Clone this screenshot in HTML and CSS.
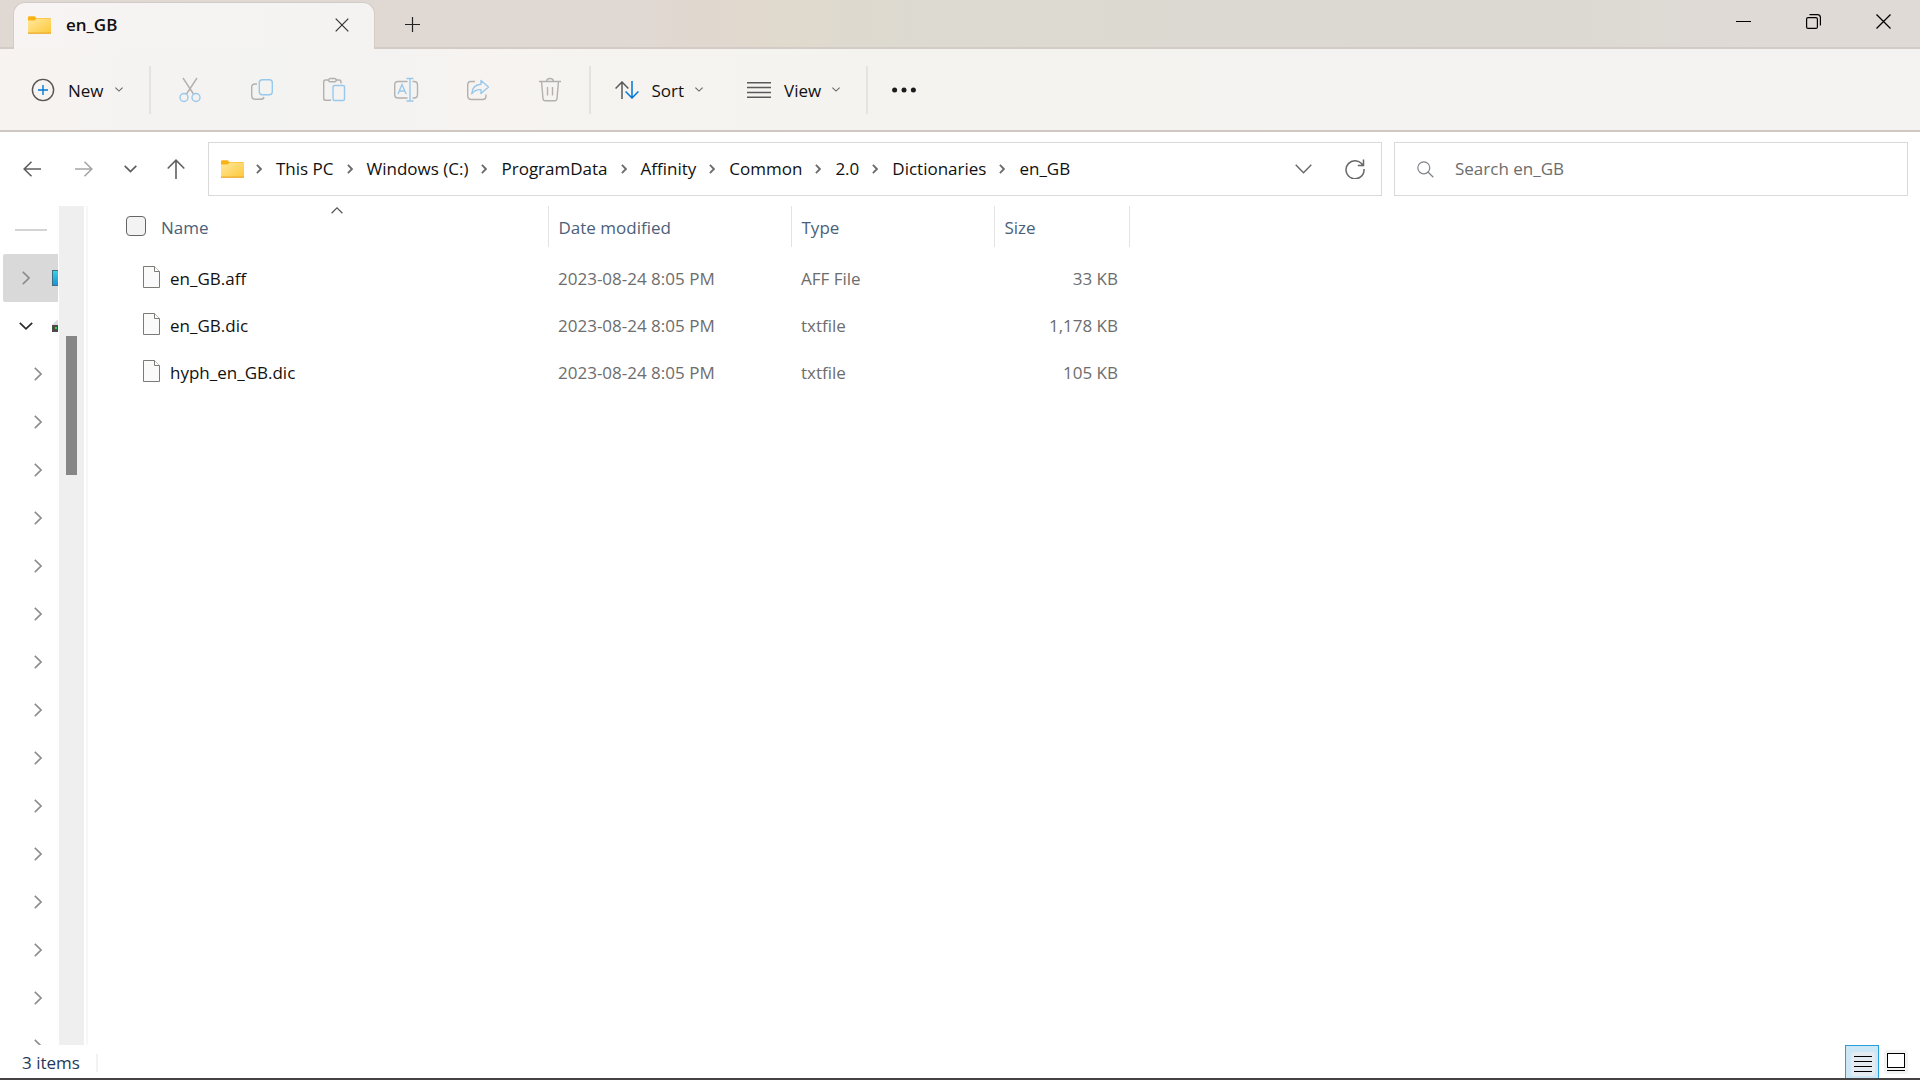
FILE: index.html
```html
<!DOCTYPE html>
<html lang="en">
<head>
<meta charset="utf-8">
<title>en_GB</title>
<link rel="stylesheet" href="styles.css">
</head>
<body>
<svg class="sprite" width="0" height="0" aria-hidden="true">
  <defs>
    <linearGradient id="folder-fill" x1="0" y1="0" x2="1" y2="1">
      <stop offset="0" stop-color="#ffe8a0"/><stop offset="1" stop-color="#fdc93a"/>
    </linearGradient>
    <linearGradient id="screen-fill" x1="0" y1="0" x2="0" y2="1">
      <stop offset="0" stop-color="#34d3e6"/><stop offset="1" stop-color="#1a93d2"/>
    </linearGradient>
    <symbol id="folder" viewBox="0 0 23 18">
      <path d="M0 1.5Q0 .2 1.3 .2H6.6L8.4 2H22.5V6H0Z" fill="#f9b316"/>
      <path d="M0 4.4H6.6L8.6 2.6H23V17H0Z" fill="url(#folder-fill)"/>
      <path d="M0 17.2H23" stroke="#eaa61f" stroke-width="1.2"/>
    </symbol>
    <symbol id="small-down" viewBox="0 0 8 5"><path d="M.4 .6L4 4.1L7.6 .6" fill="none" stroke="#666" stroke-width="1.1"/></symbol>
    <symbol id="crumb" viewBox="0 0 6 10"><path d="M.9 .9L4.9 5L.9 9.100" fill="none" stroke="#6b6b6b" stroke-width="1.8"/></symbol>
    <symbol id="tree-right" viewBox="0 0 8 14"><path d="M.8 .9L7 7L.8 13.100" fill="none" stroke="#8c8c8c" stroke-width="1.6"/></symbol>
    <symbol id="file" viewBox="0 0 17 22">
      <path d="M.5 .5H11.500L16.500 5.500V21.500H.5Z" fill="#fafafa" stroke="#7a7a76"/>
      <path d="M11.500 .5V5.500H16.500" fill="#fff" stroke="#7a7a76"/>
    </symbol>
  </defs>
</svg>

<header class="titlebar">
  <div class="tab">
    <svg class="folder"><use href="#folder"/></svg>
    <span class="tab-title">en_GB</span>
    <button class="tab-close" aria-label="Close tab"><svg width="14" height="14" viewBox="0 0 14 14"><path d="M.7 .7L13.300 13.300M13.300 .7L.7 13.300" fill="none" stroke="#333" stroke-width="1.200"/></svg></button>
  </div>
  <button class="new-tab" aria-label="New tab"><svg width="15" height="15" viewBox="0 0 15 15"><path d="M7.500 0V15M0 7.500H15" stroke="#222" stroke-width="1.200"/></svg></button>
  <div class="window-buttons">
    <button aria-label="Minimize"><svg width="15" height="15" viewBox="0 0 15 15"><path d="M0 7.500H15" stroke="#000"/></svg></button>
    <button aria-label="Restore"><svg width="15" height="15" viewBox="0 0 15 15" fill="none" stroke="#000" stroke-width="1.200"><rect x=".6" y="3.600" width="10.800" height="10.800" rx="1.500"/><path d="M3.500 .6H11.500Q14.400 .6 14.400 3.500V11.500"/></svg></button>
    <button aria-label="Close"><svg width="15" height="15" viewBox="0 0 15 15"><path d="M.5 .5L14.500 14.500M14.500 .5L.5 14.500" stroke="#000" stroke-width="1.300"/></svg></button>
  </div>
</header>

<div class="toolbar" role="toolbar" aria-label="Commands">
  <button class="command command-new">
    <svg width="24" height="24" viewBox="0 0 24 24" fill="none"><circle cx="12" cy="12" r="10.600" stroke="#555" stroke-width="1.400"/><path d="M12 7V17M7 12H17" stroke="#0078d4" stroke-width="1.400"/></svg>
    <span>New</span><svg class="small-down"><use href="#small-down"/></svg>
  </button>
  <span class="divider"></span>
  <button class="tool" aria-label="Cut" disabled><svg width="24" height="26" viewBox="0 0 24 26" fill="none" stroke-width="1.400"><path d="M5 1L15.500 17M19 1L8.500 17" stroke="#b3b1b0"/><circle cx="6" cy="20.500" r="4" stroke="#98c8ec"/><circle cx="18" cy="20.500" r="4" stroke="#98c8ec"/></svg></button>
  <button class="tool" aria-label="Copy" disabled><svg width="24" height="26" viewBox="0 0 24 26" fill="none" stroke-width="1.400"><path d="M7 7H5Q1.700 7 1.700 10.300V18.500Q1.700 22.300 5.500 22.300H10.500Q13.500 22.300 14 20" stroke="#b3b1b0"/><rect x="9.300" y="2.700" width="13" height="15" rx="3" stroke="#98c8ec"/></svg></button>
  <button class="tool" aria-label="Paste" disabled><svg width="24" height="26" viewBox="0 0 24 26" fill="none" stroke-width="1.400"><path d="M6.500 3H3.500Q1.700 3 1.700 4.800V21.500Q1.700 23.300 3.500 23.300H9M14 3H17Q19 3 19 5V6.500" stroke="#b3b1b0"/><rect x="6.700" y="1.500" width="7.500" height="3.200" rx="1.500" stroke="#b3b1b0"/><rect x="11" y="8.500" width="11.500" height="15" rx="1.500" stroke="#98c8ec"/></svg></button>
  <button class="tool" aria-label="Rename" disabled><svg width="26" height="26" viewBox="0 0 26 26" fill="none" stroke-width="1.400"><path d="M14.500 4.500H5Q1.700 4.500 1.700 8V17.500Q1.700 21 5 21H14.500M19.500 4.500H21Q24.500 4.500 24.500 8V17.500Q24.500 21 21 21H19.500" stroke="#b3b1b0"/><path d="M5 17L9 7.500L13.200 17M6.500 14H11.800M17 1.500V24M13.500 1.500H20.500M13.500 24H20.500" stroke="#98c8ec"/></svg></button>
  <button class="tool" aria-label="Share" disabled><svg width="24" height="26" viewBox="0 0 24 26" fill="none" stroke-width="1.400" stroke-linejoin="round"><path d="M9 4.500H5Q1.700 4.500 1.700 8V18.500Q1.700 22.500 5.500 22.500H16.500Q20 22.500 20 19V17.500" stroke="#b3b1b0"/><path d="M15 3.500L22.500 10L15 16.500V12.700Q9.500 12.300 5.700 16.800Q6.500 7.500 15 7.200Z" stroke="#98c8ec"/></svg></button>
  <button class="tool" aria-label="Delete" disabled><svg width="24" height="26" viewBox="0 0 24 26" fill="none" stroke="#b3b1b0" stroke-width="1.400"><path d="M1 4.500H23M8.500 4.500Q8.700 1.500 12 1.500Q15.300 1.500 15.500 4.500M3.500 4.500L5 21.500Q5.200 23.800 7.200 23.800H16.800Q18.800 23.800 19 21.500L20.500 4.500M9.500 10V18.500M14.500 10V18.500"/></svg></button>
  <span class="divider"></span>
  <button class="command command-sort">
    <svg width="24" height="18" viewBox="0 0 24 18" fill="none" stroke-width="1.500"><path d="M7 18V1M.6 7.500L7 1L13.400 7.500" stroke="#5a5a5a"/><path d="M17 0V17M10.600 10.500L17 17L23.400 10.500" stroke="#0078d4"/></svg>
    <span>Sort</span><svg class="small-down"><use href="#small-down"/></svg>
  </button>
  <button class="command command-view">
    <svg width="24" height="16" viewBox="0 0 24 16"><path d="M0 .8H24M0 5.600H24M0 10.400H24M0 15.200H24" stroke="#5a5a5a" stroke-width="1.500"/></svg>
    <span>View</span><svg class="small-down"><use href="#small-down"/></svg>
  </button>
  <span class="divider"></span>
  <button class="more" aria-label="See more"><svg width="24" height="6" viewBox="0 0 24 6" fill="#1b1b1b"><circle cx="2.600" cy="3" r="2.500"/><circle cx="12" cy="3" r="2.500"/><circle cx="21.400" cy="3" r="2.500"/></svg></button>
</div>

<div class="navigation">
  <nav class="history" aria-label="History">
    <button class="back" aria-label="Back"><svg width="18" height="16" viewBox="0 0 18 16"><path d="M18 8H1.200M8.500 .8L1.200 8L8.500 15.200" fill="none" stroke="#5f5f5f" stroke-width="1.600"/></svg></button>
    <button aria-label="Forward"><svg width="18" height="16" viewBox="0 0 18 16"><path d="M0 8H16.800M9.500 .8L16.800 8L9.500 15.200" fill="none" stroke="#a5a5a5" stroke-width="1.600"/></svg></button>
    <button aria-label="Recent locations"><svg width="13" height="8" viewBox="0 0 13 8"><path d="M.7 .8L6.500 6.600L12.300 .8" fill="none" stroke="#5f5f5f" stroke-width="1.700"/></svg></button>
    <button aria-label="Up"><svg width="18" height="20" viewBox="0 0 18 20"><path d="M9 20V1.500M.7 9.500L9 1.200L17.300 9.500" fill="none" stroke="#5f5f5f" stroke-width="1.600"/></svg></button>
  </nav>
  <div class="address">
    <svg class="folder"><use href="#folder"/></svg>
    <ol class="crumbs">
      <li><svg class="crumb"><use href="#crumb"/></svg><a href="#">This PC</a></li>
      <li><svg class="crumb"><use href="#crumb"/></svg><a href="#">Windows (C:)</a></li>
      <li><svg class="crumb"><use href="#crumb"/></svg><a href="#">ProgramData</a></li>
      <li><svg class="crumb"><use href="#crumb"/></svg><a href="#">Affinity</a></li>
      <li><svg class="crumb"><use href="#crumb"/></svg><a href="#">Common</a></li>
      <li><svg class="crumb"><use href="#crumb"/></svg><a href="#">2.0</a></li>
      <li><svg class="crumb"><use href="#crumb"/></svg><a href="#">Dictionaries</a></li>
      <li><svg class="crumb"><use href="#crumb"/></svg><a href="#">en_GB</a></li>
    </ol>
    <button aria-label="Previous locations"><svg width="17" height="10" viewBox="0 0 17 10"><path d="M.7 .8L8.500 8.700L16.300 .8" fill="none" stroke="#666" stroke-width="1.400"/></svg></button>
    <button aria-label="Refresh"><svg width="20" height="20" viewBox="0 0 20 20"><path d="M18.300 7.200A9 9 0 1 0 19 10M18.500 .5V6.500H12.800" fill="none" stroke="#666" stroke-width="1.500"/></svg></button>
  </div>
  <label class="search">
    <svg width="17" height="17" viewBox="0 0 17 17"><circle cx="6.800" cy="6.800" r="6" fill="none" stroke="#80858c" stroke-width="1.200"/><path d="M11.200 11.200L16.300 16.300" stroke="#80858c" stroke-width="1.300"/></svg>
    <input type="search" placeholder="Search en_GB" aria-label="Search en_GB">
  </label>
</div>

<div class="content">
  <aside class="sidebar">
    <hr>
    <ul class="tree">
      <li class="selected"><button aria-label="Expand"><svg class="tree-right"><use href="#tree-right"/></svg></button>
        <svg width="6" height="16" viewBox="0 0 6 16"><rect x=".5" y=".5" width="8" height="15" fill="url(#screen-fill)" stroke="#3f6f86"/></svg></li>
      <li><button aria-label="Collapse"><svg width="14" height="8" viewBox="0 0 14 8"><path d="M.8 .8L7 6.800L13.200 .8" fill="none" stroke="#2b2b2b" stroke-width="1.700"/></svg></button>
        <svg width="6" height="14" viewBox="0 0 6 14"><path d="M0 6L5 1H6V6Z" fill="#dcdcdc"/><rect y="6" width="6" height="7" fill="#4c4c4c"/><rect x="3" y="8" width="2" height="2" fill="#22e32a"/></svg></li>
      <li class="child"><button aria-label="Expand"><svg class="tree-right"><use href="#tree-right"/></svg></button></li>
      <li class="child"><button aria-label="Expand"><svg class="tree-right"><use href="#tree-right"/></svg></button></li>
      <li class="child"><button aria-label="Expand"><svg class="tree-right"><use href="#tree-right"/></svg></button></li>
      <li class="child"><button aria-label="Expand"><svg class="tree-right"><use href="#tree-right"/></svg></button></li>
      <li class="child"><button aria-label="Expand"><svg class="tree-right"><use href="#tree-right"/></svg></button></li>
      <li class="child"><button aria-label="Expand"><svg class="tree-right"><use href="#tree-right"/></svg></button></li>
      <li class="child"><button aria-label="Expand"><svg class="tree-right"><use href="#tree-right"/></svg></button></li>
      <li class="child"><button aria-label="Expand"><svg class="tree-right"><use href="#tree-right"/></svg></button></li>
      <li class="child"><button aria-label="Expand"><svg class="tree-right"><use href="#tree-right"/></svg></button></li>
      <li class="child"><button aria-label="Expand"><svg class="tree-right"><use href="#tree-right"/></svg></button></li>
      <li class="child"><button aria-label="Expand"><svg class="tree-right"><use href="#tree-right"/></svg></button></li>
      <li class="child"><button aria-label="Expand"><svg class="tree-right"><use href="#tree-right"/></svg></button></li>
      <li class="child"><button aria-label="Expand"><svg class="tree-right"><use href="#tree-right"/></svg></button></li>
      <li class="child"><button aria-label="Expand"><svg class="tree-right"><use href="#tree-right"/></svg></button></li>
      <li class="child"><button aria-label="Expand"><svg class="tree-right"><use href="#tree-right"/></svg></button></li>
    </ul>
  </aside>
  <div class="scrollbar"><div class="thumb"></div></div>
  <main class="files">
    <table>
      <colgroup><col class="col-name"><col class="col-date"><col class="col-type"><col class="col-size"></colgroup>
      <thead>
        <tr>
          <th scope="col" aria-sort="ascending">
            <div class="name-head"><input type="checkbox" aria-label="Select all">Name</div>
            <svg class="sort-mark" width="12" height="7" viewBox="0 0 12 7"><path d="M.6 6.200L6 .9L11.400 6.200" fill="none" stroke="#555" stroke-width="1.200"/></svg>
          </th>
          <th scope="col">Date modified</th>
          <th scope="col">Type</th>
          <th scope="col">Size</th>
        </tr>
      </thead>
      <tbody>
        <tr><td><div class="file-name"><svg class="file"><use href="#file"/></svg>en_GB.aff</div></td><td>2023-08-24 8:05 PM</td><td>AFF File</td><td class="size">33 KB</td></tr>
        <tr><td><div class="file-name"><svg class="file"><use href="#file"/></svg>en_GB.dic</div></td><td>2023-08-24 8:05 PM</td><td>txtfile</td><td class="size">1,178 KB</td></tr>
        <tr><td><div class="file-name"><svg class="file"><use href="#file"/></svg>hyph_en_GB.dic</div></td><td>2023-08-24 8:05 PM</td><td>txtfile</td><td class="size">105 KB</td></tr>
      </tbody>
    </table>
  </main>
</div>

<footer class="status">
  <span class="count">3 items</span>
  <div class="views">
    <button class="view active" aria-label="Details" aria-pressed="true"><svg width="24" height="24" viewBox="0 0 24 24"><rect width="24" height="24" rx="3" fill="#e4ecf2"/><path d="M3 4.500H21M3 9.500H21M3 14.500H21M3 19.500H21" stroke="#000"/></svg></button>
    <button class="view" aria-label="Large thumbnails" aria-pressed="false"><svg width="24" height="24" viewBox="0 0 24 24"><rect width="24" height="24" rx="3" fill="#f3f3f3"/><rect x="3.500" y="3.500" width="17" height="14" fill="#fff" stroke="#000"/><path d="M3 20.500H21" stroke="#000"/></svg></button>
  </div>
</footer>
</body>
</html>
```

FILE: styles.css
```css
* {
  box-sizing: border-box;
}

body {
  margin: 0;
  height: 100vh;
  display: flex;
  flex-direction: column;
  overflow: hidden;
  background: #fff;
  border-bottom: 2px solid #454344;
  color: #111;
  font: 17px/24px "Open Sans", "Noto Sans", sans-serif;
}

button {
  display: flex;
  align-items: center;
  justify-content: center;
  flex: none;
  margin: 0;
  padding: 0;
  border: 0;
  background: none;
  color: inherit;
  font: inherit;
}

svg {
  display: block;
  flex: none;
}

.sprite {
  position: absolute;
}

.folder {
  width: 23px;
  height: 18px;
}

.small-down {
  width: 8px;
  height: 5px;
}

/* Title bar */

.titlebar {
  display: flex;
  flex: none;
  height: 49px;
  padding-left: 13px;
  border-bottom: 2px solid #d3cbc6;
  background: linear-gradient(90deg, #e0d8d3 0, #e0d8d3 32%, #e1d9cd 40%, #dcdad1 48%, #dcd9d2 80%, #dfdad6 92%);
}

.tab {
  display: flex;
  align-items: center;
  width: 362px;
  height: 47px;
  margin-top: 2px;
  padding: 0 18px 2px 14px;
  border: 1px solid #d3cbc6;
  border-bottom: 0;
  border-radius: 12px 12px 0 0;
  background: linear-gradient(90deg, #f7f4f3, #f4f3f1);
}

.tab-title {
  flex: 1;
  margin-left: 15px;
  font-weight: 600;
}

.tab-close {
  width: 28px;
  height: 28px;
}

.new-tab {
  width: 48px;
  height: 49px;
  margin-left: 13px;
}

.window-buttons {
  display: flex;
  margin-right: 2px;
  margin-left: auto;
}

.window-buttons button {
  width: 70px;
  height: 43px;
}

/* Command bar */

.toolbar {
  display: flex;
  align-items: center;
  flex: none;
  height: 83px;
  border-bottom: 2px solid #cec7c2;
  background: linear-gradient(90deg, #f7f3f1 0, #f3f3f1 14%, #f6f3f1 24%, #f5f3ef 45%, #f4f3f2 80%);
}

.divider {
  width: 2px;
  height: 48px;
  background: #e5e3e1;
}

.tool,
.more {
  width: 72px;
  height: 48px;
}

.divider + .tool {
  margin-left: 3px;
}

.tool + .divider {
  margin-left: 3px;
}

.command {
  height: 48px;
}

.command span {
  margin: 0 11px 0 13px;
  padding-top: 2px;
}

.command-new {
  padding: 0 26px 0 31px;
}

.command-sort {
  padding: 0 20px 0 24px;
}

.command-view {
  padding: 0 26px 0 24px;
}

/* Navigation row */

.navigation {
  display: grid;
  flex: none;
  grid-template-columns: 188px 1174fr 514fr;
  gap: 12px;
  height: 74px;
  padding: 10px 12px 10px 8px;
}

.history {
  display: flex;
  align-items: center;
  padding-left: 1px;
}

.history button {
  width: 46px;
  height: 48px;
}

.history .back {
  margin-right: 6px;
}

.address,
.search {
  display: flex;
  align-items: center;
  min-width: 0;
  height: 54px;
  border: 1px solid #d9d9d9;
}

.address {
  padding: 0 1px 0 12px;
}

.address button {
  width: 51px;
  height: 48px;
}

.crumbs {
  display: flex;
  flex: 1;
  margin: 0 0 0 -1px;
  padding: 0;
  list-style: none;
}

.crumbs li {
  display: flex;
  align-items: center;
}

.crumb {
  width: 6px;
  height: 10px;
  margin: 0 14px 0 13px;
}

.crumbs a {
  color: inherit;
  text-decoration: none;
  white-space: nowrap;
}

.search {
  gap: 21px;
  padding: 0 22px;
}

.search input {
  flex: 1;
  min-width: 0;
  padding: 0;
  border: 0;
  outline: 0;
  background: none;
  font: inherit;
}

.search input::placeholder {
  color: #6c6c6c;
  opacity: 1;
}

/* Folder tree */

.content {
  display: flex;
  flex: 1;
  min-height: 0;
}

.sidebar {
  width: 59px;
  padding: 23px 1px 0 3px;
  overflow: hidden;
}

.sidebar hr {
  height: 2px;
  margin: 0 11px 23px 12px;
  border: 0;
  background: #d4d4d4;
}

.tree {
  margin: 0;
  padding: 0;
  list-style: none;
}

.tree li {
  display: flex;
  align-items: center;
  justify-content: space-between;
  height: 48px;
  padding-left: 10px;
}

.tree .selected {
  border-radius: 2px 0 0 2px;
  background: #d9d9d9;
}

.tree .child {
  padding-left: 22px;
}

.tree button {
  width: 25px;
  height: 24px;
}

.tree-right {
  width: 8px;
  height: 14px;
}

.scrollbar {
  width: 25px;
  padding: 130px 7px 0;
  background: #efefef;
}

.thumb {
  height: 139px;
  background: #868686;
}

/* File list */

.files {
  flex: 1;
  margin-left: 2px;
  border-left: 2px solid #f7f7f7;
}

table {
  width: 1041px;
  table-layout: fixed;
  border-collapse: collapse;
}

.col-name {
  width: 460px;
}

.col-date {
  width: 243px;
}

.col-type {
  width: 203px;
}

.col-size {
  width: 135px;
}

th {
  position: relative;
  height: 41px;
  padding: 2px 9px 0 10px;
  border-right: 1px solid #e3e3e3;
  color: #4c607a;
  font-weight: 400;
  text-align: left;
}

td {
  height: 47px;
  padding: 0 9px 0 10px;
  color: #6d6d6d;
}

tbody::before {
  content: "";
  display: block;
  height: 8px;
}

.name-head {
  display: flex;
  align-items: center;
  gap: 15px;
  padding-left: 28px;
}

.name-head input {
  appearance: none;
  width: 20px;
  height: 20px;
  margin: 0 0 4px;
  border: 1px solid #666;
  border-radius: 4px;
  background: #f3f3f3;
}

.sort-mark {
  position: absolute;
  top: 1px;
  right: 205px;
}

.file-name {
  display: flex;
  align-items: center;
  gap: 10px;
  padding-left: 45px;
  color: #111;
}

.file {
  width: 17px;
  height: 22px;
  margin-bottom: 3px;
}

td.size {
  padding-right: 11px;
  text-align: right;
}

/* Status bar */

.status {
  display: flex;
  align-items: center;
  flex: none;
  height: 33px;
  padding: 0 7px 0 22px;
  color: #1e395b;
}

.count {
  height: 18px;
  margin-top: 2px;
  padding-right: 16px;
  border-right: 2px solid #f2f2f2;
  line-height: 18px;
}

.views {
  display: flex;
  margin-left: auto;
}

.view {
  width: 34px;
  height: 33px;
}

.active {
  padding: 4px 0 0 2px;
  border: 1px solid #26a0da;
  border-bottom: 0;
  background: #cce8f6;
}
```
